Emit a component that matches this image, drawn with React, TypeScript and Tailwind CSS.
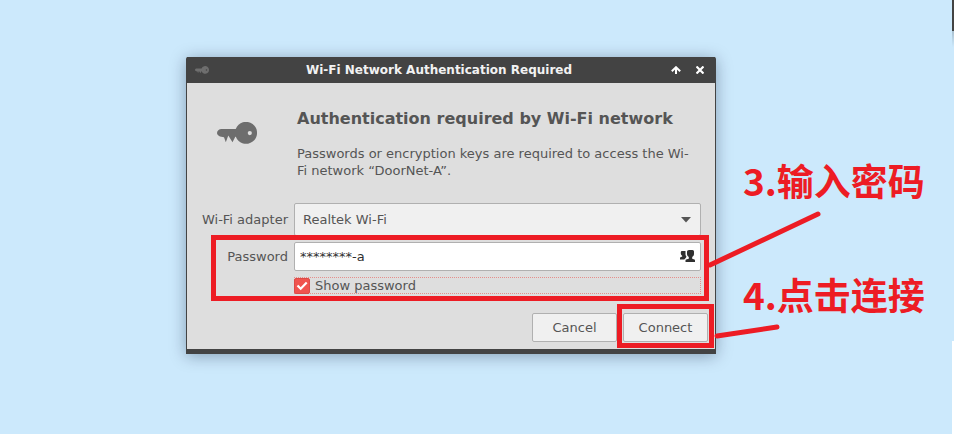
import React, { useState } from 'react';

const KeyIcon: React.FC<{ className: string }> = ({ className }) => (
  <svg viewBox="0 0 40 22" className={className} fill="currentColor" aria-hidden="true">
    <path
      fillRule="evenodd"
      d="M18.750 7H4.500C2 7 0 8.800 0 11c0 1.500 1.300 2.800 3 3.400L7 15.300l1.800 4.900 2.500-6.700 4.200 6.700 2.800-5.400h.5A11 11 0 1 0 18.750 7ZM32.800 9a2.100 2.100 0 1 1 0 4.200 2.100 2.100 0 0 1 0-4.200Z"
    />
  </svg>
);

const UsersIcon = () => (
  <svg viewBox="0 0 15 12" className="h-3 w-[15px]" fill="currentColor" aria-hidden="true">
    <path d="M9 0h3.500Q14 0 14 1.500V4q0 1.800-1.800 3v1.700l2.200.8q.6.200.6.900V12H5.500v-1.600q0-.7.6-.9l2.700-.8V7Q7 5.800 7 4V1.500Q7 0 9 0z" />
    <path d="M2 1h3.500v3.500q.2 1.500 1 2.300l-.8 1.100L4.300 9.500H0V8q0-.5.500-.7l1.700-.8V5.700Q.8 5 .8 3.600V2.200Q.8 1 2 1z" />
  </svg>
);

const TitleBar = () => (
  <header className="flex h-[26px] items-center bg-[#434343] px-2 text-white">
    <div className="w-8">
      <KeyIcon className="h-2 w-3.5 text-[#6e6e6e]" />
    </div>
    <h1 className="flex-1 text-center text-xs font-bold text-[#f2f2f2]">
      Wi-Fi Network Authentication Required
    </h1>
    <div className="flex w-14 items-center justify-end gap-3 pr-px">
      <button type="button" aria-label="Roll up" className="flex h-3 w-3 items-center justify-center">
        <svg viewBox="0 0 10 8" className="h-2 w-2.5" fill="none" stroke="currentColor" strokeWidth="2">
          <path d="M5 8V1M.8 5.200 5 1.200l4.200 4" />
        </svg>
      </button>
      <button type="button" aria-label="Close" className="flex h-3 w-3 items-center justify-center">
        <svg viewBox="0 0 8 8" className="h-2 w-2" fill="none" stroke="currentColor" strokeWidth="2.200">
          <path d="m.5.5 7 7M7.500.5l-7 7" />
        </svg>
      </button>
    </div>
  </header>
);

export default function App() {
  const [password, setPassword] = useState('********-a');
  const [show, setShow] = useState(true);

  return (
    <main className="relative min-h-screen bg-[#cce9fc] pt-[57px] pb-20 pl-[186px] font-['DejaVu_Sans',sans-serif] text-[13px] leading-[17px] text-[#555]">
      <section className="relative w-full max-w-[530px] rounded-t-[2px] border-x border-b-[5px] border-[#434343] bg-[#dedede] shadow-[0_2px_16px_rgba(0,20,50,0.35)]">
        <TitleBar />

        <div className="flex gap-10 pt-6 pr-5 pl-[30px]">
          <KeyIcon className="mt-[15px] h-[22px] w-10 shrink-0 text-[#6d6d6d]" />
          <div>
            <h2 className="text-base leading-6 font-bold">Authentication required by Wi-Fi network</h2>
            <p className="mt-3.5">
              Passwords or encryption keys are required to access the Wi-Fi network “DoorNet-A”.
            </p>
          </div>
        </div>

        <form onSubmit={(e) => e.preventDefault()}>
          <div className="mt-6 flex flex-col gap-1.5 px-3.5">
            <div className="flex items-center gap-1.5">
              <label htmlFor="adapter" className="w-[87px] text-right whitespace-nowrap">
                Wi-Fi adapter
              </label>
              <div className="relative flex-1">
                <select
                  id="adapter"
                  className="block h-[33px] w-full appearance-none rounded-[2px] border border-[#b0b0b0] bg-[#f0f0f0] px-2 outline-none"
                >
                  <option>Realtek Wi-Fi</option>
                </select>
                <svg
                  viewBox="0 0 10 6"
                  className="pointer-events-none absolute top-3.5 right-2.5 h-1.5 w-2.5"
                  fill="currentColor"
                >
                  <path d="M0 0h10L5 5.500z" />
                </svg>
              </div>
            </div>

            <div className="relative flex flex-col gap-1.5">
              <div className="flex items-center gap-1.5">
                <label htmlFor="password" className="w-[87px] text-right">
                  Password
                </label>
                <div className="relative flex-1 text-[#303030]">
                  <input
                    id="password"
                    type={show ? 'text' : 'password'}
                    value={password}
                    onChange={(e) => setPassword(e.target.value)}
                    className="block h-[29px] w-full rounded-[2px] border border-[#b0b0b0] bg-white pr-7 pl-[5px] outline-none"
                  />
                  <span className="pointer-events-none absolute top-2 right-1.5">
                    <UsersIcon />
                  </span>
                </div>
              </div>

              <label className="ml-[93px] flex h-[17px] items-center gap-[5px] border border-dotted border-[#e58f8c]">
                <span className="relative -m-px h-4 w-4">
                  <input
                    type="checkbox"
                    checked={show}
                    onChange={(e) => setShow(e.target.checked)}
                    className="peer block h-4 w-4 appearance-none rounded-[2px] border border-[#b0b0b0] bg-white checked:border-[#dd4b47] checked:bg-[#f0544f]"
                  />
                  <svg
                    viewBox="0 0 16 16"
                    className="pointer-events-none absolute inset-0 hidden h-4 w-4 peer-checked:block"
                    fill="none"
                    stroke="white"
                    strokeWidth="2.200"
                  >
                    <path d="m3.500 7.500 3.200 3.200 6-6.200" />
                  </svg>
                </span>
                <span className="pl-px">Show password</span>
              </label>

              <div className="pointer-events-none absolute -top-[7px] -right-2 -bottom-[7px] left-2.5 border-5 border-[#ed1c24]" />
            </div>
          </div>

          <div className="mt-[19px] flex justify-end gap-1.5 pr-[7px] pb-[7px]">
            <button type="button" className="h-[29px] w-[85px] rounded-[2px] border border-[#b0b0b0] bg-[#f0f0f0]">
              Cancel
            </button>
            <div className="relative">
              <button type="submit" className="block h-[29px] w-[85px] rounded-[2px] border border-[#b0b0b0] bg-[#f0f0f0]">
                Connect
              </button>
              <div className="pointer-events-none absolute -inset-x-1.5 -top-[9px] -bottom-1.5 border-5 border-[#ed1c24]" />
            </div>
          </div>
        </form>

        {/* callouts drawn over the desktop, next to the fields they explain */}
        <div className="pointer-events-none absolute top-0 left-full font-['Noto_Sans_CJK_SC',sans-serif] text-[37px] leading-12 font-bold whitespace-nowrap text-[#ed1c24]">
          <svg
            viewBox="0 0 120 140"
            className="absolute top-[147px] -left-2 h-[140px] w-[120px]"
            fill="none"
            stroke="currentColor"
            strokeWidth="5"
            strokeLinecap="round"
          >
            <path d="M3 61 111 10M10 132 70 123" />
          </svg>
          <p className="absolute top-[99px] left-7">3.输入密码</p>
          <p className="absolute top-[213px] left-7">4.点击连接</p>
        </div>
      </section>

      {/* edges of the neighbouring windows */}
      <div className="absolute top-0 right-0 h-[31px] w-0.5 bg-[#434343]" />
      <div className="absolute top-[31px] right-0 h-4 w-0.5 bg-linear-to-b from-[#a9c0cf] to-[#cce9fc]" />
      <div className="absolute top-[341px] right-0 bottom-0 w-0.5 bg-white" />
    </main>
  );
}
